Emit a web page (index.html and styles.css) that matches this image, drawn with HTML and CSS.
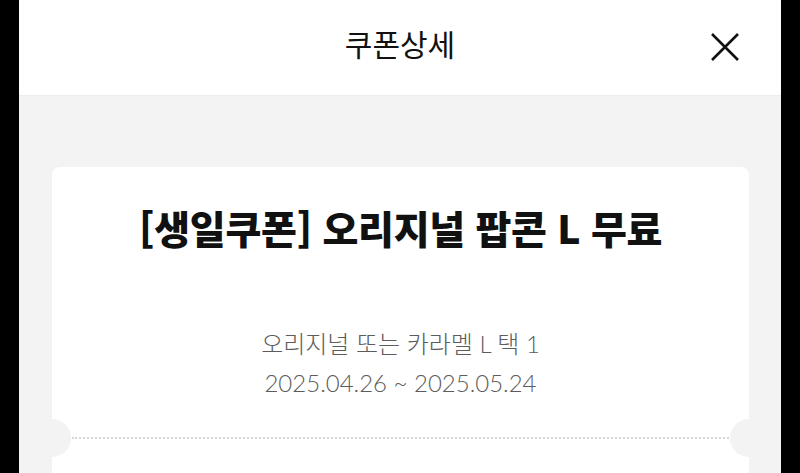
FILE: index.html
```html
<!DOCTYPE html>
<html lang="ko">
<head>
<meta charset="utf-8">
<link rel="stylesheet" href="styles.css">
</head>
<body>
<div class="screen">
  <header class="topbar">
    <h1 class="topbar-title">쿠폰상세</h1>
    <button class="close" aria-label="닫기">
      <svg width="30" height="30" viewBox="0 0 30 30"><path d="M2 2 L28 28 M28 2 L2 28" stroke="#111" stroke-width="2.6" fill="none"/></svg>
    </button>
  </header>
  <main class="content">
    <section class="card">
      <h2 class="coupon-title">[생일쿠폰] 오리지널 팝콘 L 무료</h2>
      <div class="coupon-info">
        <p class="info-line">오리지널 또는 카라멜 L 택 1</p>
        <p class="info-line">2025.04.26 ~ 2025.05.24</p>
      </div>
      <div class="divider">
        <span class="notch notch-left"></span>
        <span class="notch notch-right"></span>
      </div>
    </section>
  </main>
</div>
</body>
</html>
```
FILE: styles.css
```css
* { box-sizing: border-box; }
html, body { margin: 0; padding: 0; }
body {
  background: #000;
  width: 800px;
  height: 473px;
  overflow: hidden;
  font-family: "Noto Sans CJK KR", "Noto Sans", sans-serif;
}
.screen {
  margin: 0 19px;
  width: 762px;
  height: 473px;
  background: #f3f3f3;
  overflow: hidden;
}
.topbar {
  position: relative;
  height: 96px;
  background: #fff;
  border-bottom: 1px solid #ececec;
  display: flex;
  align-items: center;
  justify-content: center;
}
.topbar-title {
  margin: 0;
  font-size: 30px;
  font-weight: 400;
  color: #111;
  line-height: 1;
  padding-bottom: 10px;
}
.close {
  position: absolute;
  right: 41px;
  top: 32px;
  width: 30px;
  height: 30px;
  padding: 0;
  border: 0;
  background: none;
  display: flex;
}
.content {
  padding: 71px 32px 0 33px;
}
.card {
  position: relative;
  background: #fff;
  border-radius: 8px;
  padding-top: 30px;
  height: 360px;
}
.coupon-title {
  margin: 0;
  text-align: center;
  font-size: 39px;
  font-weight: 900;
  color: #111;
  line-height: 60px;
  letter-spacing: -0.3px;
}
.coupon-info {
  margin-top: 67px;
  text-align: center;
  color: #5c5c5c;
  font-family: Lato, "Noto Sans CJK KR", sans-serif;
  font-size: 24px;
  font-weight: 300;
}
.info-line {
  margin: 0;
  line-height: 39px;
}
.divider {
  position: relative;
  margin: 35px 20px 0 20px;
  border-top: 2px dotted #d6d6d6;
}
.notch {
  position: absolute;
  top: -20px;
  width: 38px;
  height: 38px;
  border-radius: 50%;
  background: #f3f3f3;
}
.notch-left { left: -39px; }
.notch-right { right: -39px; }
```
